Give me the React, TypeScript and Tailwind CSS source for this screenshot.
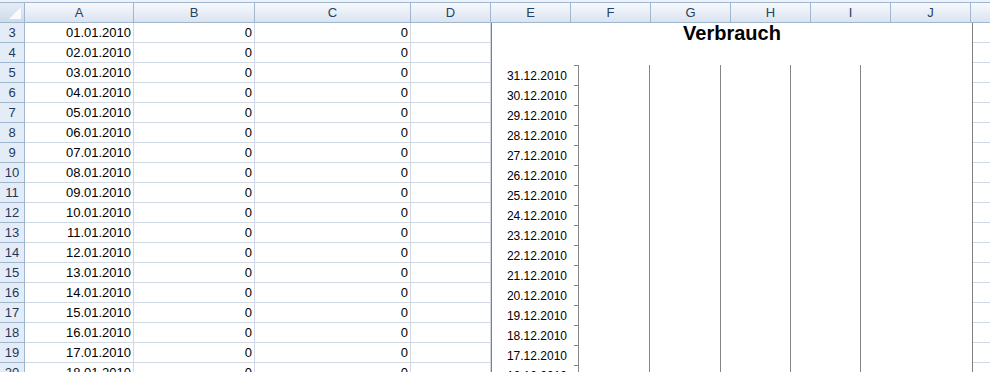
const cols = [
  { name: "A", w: 109 },
  { name: "B", w: 121 },
  { name: "C", w: 156 },
  { name: "D", w: 80 },
  { name: "E", w: 80 },
  { name: "F", w: 80 },
  { name: "G", w: 80 },
  { name: "H", w: 80 },
  { name: "I", w: 80 },
  { name: "J", w: 80 },
  { name: "", w: 80 },
];

const rows = Array.from({ length: 18 }, (_, i) => ({
  num: i + 3,
  date: `${String(i + 1).padStart(2, "0")}.01.2010`,
}));

const chartDates = Array.from({ length: 16 }, (_, i) => `${31 - i}.12.2010`);

function Chart() {
  return (
    <div className="absolute left-[491px] top-[23px] w-[482px] h-[360px] bg-white border-x border-[#7f7f7f]">
      <div className="text-center text-[20px] font-bold leading-[22px] text-black -mt-[1px]">Verbrauch</div>
      <svg className="absolute left-0 top-0" width="480" height="360" style={{ fontFamily: '"Liberation Sans", Arial, sans-serif' }}>
        {/* value gridlines */}
        {[86, 157, 228, 298, 368].map((x) => (
          <line key={x} x1={x + 0.5} y1="42" x2={x + 0.5} y2="360" stroke="#868686" strokeWidth="1" />
        ))}
        {/* category ticks + labels */}
        {chartDates.map((d, i) => (
          <g key={d}>
            <line x1="82" y1={42.5 + i * 20} x2="87" y2={42.5 + i * 20} stroke="#868686" strokeWidth="1" />
            <text x="75" y={57 + i * 20} textAnchor="end" fontSize="12" fill="#000">
              {d}
            </text>
          </g>
        ))}
      </svg>
    </div>
  );
}

export default function App() {
  return (
    <div className="relative w-[990px] h-[372px] overflow-hidden bg-white font-['Liberation_Sans',Arial,sans-serif] text-[13px] text-black">
      {/* column headers */}
      <div className="h-[2px] bg-[#eef2f8]" />
      <div className="flex h-[21px] border-y border-[#9eb6ce] bg-gradient-to-b from-[#f7fafd] to-[#dae3f0]">
        <div className="relative w-[25px] shrink-0 border-r border-[#9eb6ce] bg-gradient-to-b from-[#e5ecf6] to-[#cfdbea]">
          <svg className="absolute right-[3px] bottom-[3px]" width="12" height="12">
            <polygon points="12,0 12,12 0,12" fill="#f8fafd" />
          </svg>
        </div>
        {cols.map((c, i) => (
          <div
            key={i}
            style={{ width: c.w }}
            className="shrink-0 border-r border-[#9eb6ce] flex items-center justify-center text-[#27415f] leading-none"
          >
            {c.name}
          </div>
        ))}
      </div>

      {/* rows */}
      {rows.map((r) => (
        <div key={r.num} className="flex h-[20px]">
          <div className="w-[25px] shrink-0 border-r border-b border-[#9eb6ce] bg-[#e4ecf7] flex items-center justify-center pt-[1px] text-[#1e395b]">
            {r.num}
          </div>
          {cols.map((c, i) => (
            <div
              key={i}
              style={{ width: c.w }}
              className="shrink-0 border-r border-b border-[#d0d7e5] flex items-center justify-end pr-[2px] pt-[1px]"
            >
              {i === 0 ? r.date : i === 1 || i === 2 ? "0" : ""}
            </div>
          ))}
        </div>
      ))}

      <Chart />
    </div>
  );
}
